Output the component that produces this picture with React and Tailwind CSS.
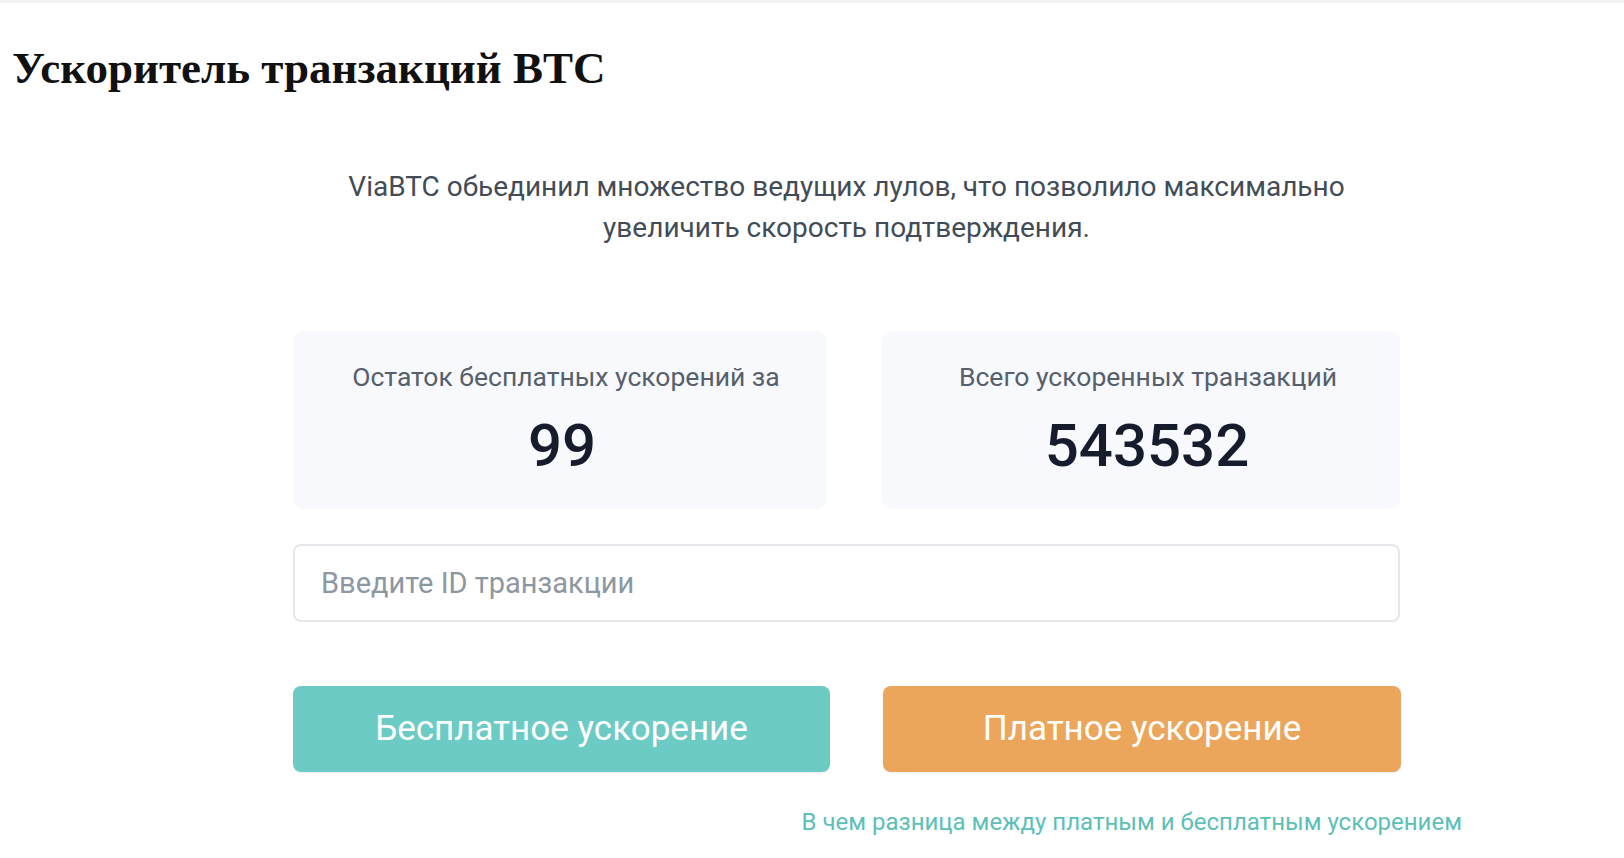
export default function App() {
  return (
    <div className="min-h-screen w-full bg-white border-t-[3px] border-[#f3f4f6]" style={{ fontFamily: 'Roboto, "Noto Sans", sans-serif' }}>
      <h1
        className="pt-[37px] pl-[12px] text-[45px] leading-[56px] font-bold text-[#111111]"
        style={{ fontFamily: '"Liberation Serif", serif' }}
      >
        Ускоритель транзакций BTC
      </h1>

      <div className="ml-[293px] w-[1107px]">
        <p className="mt-[70px] text-center text-[28px] leading-[41px] text-[#424c57]">
          ViaBTC обьединил множество ведущих лулов, что позволило максимально
          <br />
          увеличить скорость подтверждения.
        </p>

        <div className="mt-[83px] grid grid-cols-[534px_518px] gap-[55px]">
          <div className="h-[178px] rounded-[10px] bg-[#f7f9fc] flex flex-col items-center pt-[30px]">
            <div className="pl-[12px] text-[26.5px] leading-[32px] text-[#56606c]">Остаток бесплатных ускорений за</div>
            <div className="mt-[17px] pl-[4px] text-[60px] leading-[72px] font-medium text-[#161c2b]">99</div>
          </div>
          <div className="h-[178px] rounded-[10px] bg-[#f7f9fc] flex flex-col items-center pt-[30px]">
            <div className="pl-[14px] text-[26.5px] leading-[32px] text-[#56606c]">Всего ускоренных транзакций</div>
            <div className="mt-[17px] pl-[12px] text-[60px] leading-[72px] font-medium text-[#161c2b]">543532</div>
          </div>
        </div>

        <input
          className="mt-[35px] block w-full h-[78px] rounded-[8px] border-2 border-[#e4e8ec] px-[26px] text-[29px] text-[#333] placeholder:text-[#8d97a1] outline-none"
          placeholder="Введите ID транзакции"
        />

        <div className="mt-[64px] grid grid-cols-[537px_518px] gap-[53px]">
          <button className="h-[86px] rounded-[8px] bg-[#6dcbc5] text-white text-[35px] shadow-[0_1px_2px_rgba(0,0,0,0.08)]">
            Бесплатное ускорение
          </button>
          <button className="h-[86px] rounded-[8px] bg-[#eba65b] text-white text-[35px] shadow-[0_1px_2px_rgba(0,0,0,0.08)]">
            Платное ускорение
          </button>
        </div>

        <div className="mt-[35px] flex justify-end mr-[-62px]">
          <a className="text-[24px] leading-[30px] text-[#5cbfb8]">В чем разница между платным и бесплатным ускорением</a>
        </div>
      </div>
    </div>
  )
}
